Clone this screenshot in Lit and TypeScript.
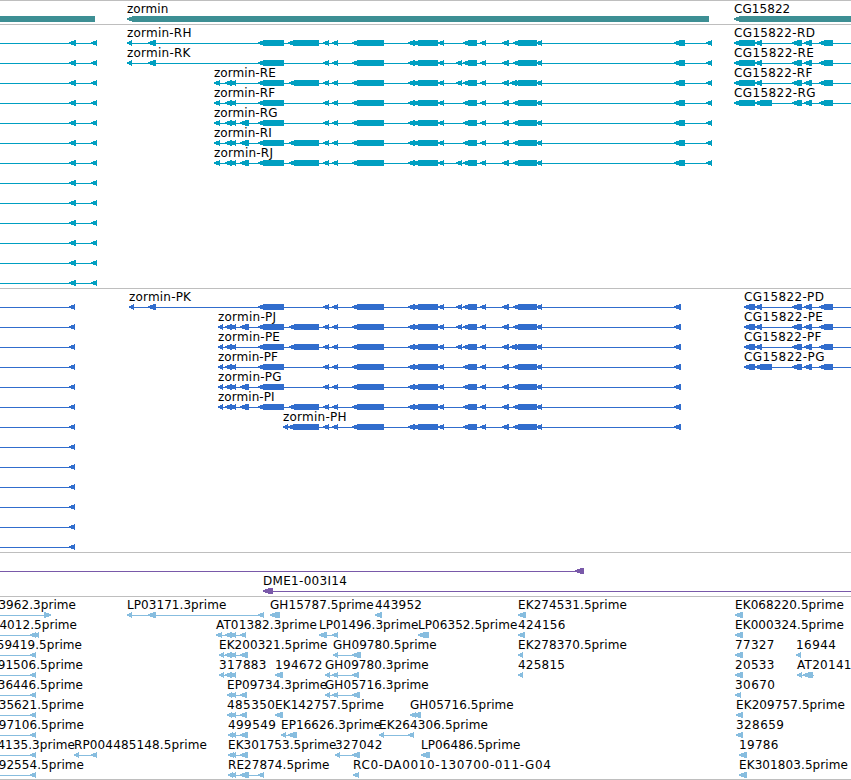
import { LitElement, html, svg, css, nothing } from 'lit';
import { customElement, property } from 'lit/decorators.js';

type Span = [number, number];

interface Feature {
    exons: Span[];
    label?: string;
    labelWidth?: number;
    // the label is cut by the left edge, labelEnd is where it stops
    labelEnd?: number;
    from?: number;
    to?: number;
    forward?: boolean;
}

interface Track {
    kind: string;
    rows: Feature[][];
}

const WIDTH = 851;

const f = (label: string, exons: Span[], more: Partial<Feature> = {}): Feature => ({ label, exons, ...more });

const cut = (label: string, labelEnd: number, exons: Span[] = [[30, 36]]): Feature => ({
    label, labelEnd, exons, from: 0,
});

// exons shared by the zormin models
const A: Span = [258, 284];
const B: Span = [289, 319];
const C: Span[] = [[323, 329], [332, 338], [352, 384], [408, 415], [413, 438], [438, 444]];
const D: Span = [456, 462];
const E: Span[] = [[463, 477], [480, 486], [502, 509]];
const F: Span = [510, 517];
const G: Span[] = [[513, 537], [536, 542]];
const R_END: Span[] = [[674, 685], [706, 712]];
const P_END: Span[] = [[674, 681]];
const SMALL: Span[] = [[225, 232], [230, 236]];
const H: Span = [240, 249];
const CG_TAIL: Span[] = [[792, 802], [804, 812], [819, 833]];

const leftR = (): Feature => ({ exons: [[69, 76], [91, 97]], from: 0 });
const leftP = (): Feature => ({ exons: [[69, 75]], from: 0 });

const cg = (name: string, start: number, labelWidth: number, second: Span = [755, 762]): Feature =>
    f(name, [[start, 755], second, ...CG_TAIL], { to: WIDTH, labelWidth });

const genes: Track = {
    kind: 'gene',
    rows: [[
        { exons: [[-10, 95]] },
        f('zormin', [[127, 709]]),
        f('CG15822', [[734, 870]]),
    ]],
};

const transcripts: Track = {
    kind: 'transcript',
    rows: [
        [leftR(), f('zormin-RH', [[127, 132], [148, 156], A, [288, 319], ...C, ...E, ...G, ...R_END], { labelWidth: 64.5 }), cg('CG15822-RD', 734, 81)],
        [leftR(), f('zormin-RK', [[127, 132], [148, 156], A, ...C, D, ...E, ...G, ...R_END], { labelWidth: 63.5 }), cg('CG15822-RE', 734, 80)],
        [leftR(), f('zormin-RE', [[214, 220], ...SMALL, A, B, ...C, D, ...E, F, ...G, ...R_END]), cg('CG15822-RF', 734, 78.5)],
        [leftR(), f('zormin-RF', [[214, 220], ...SMALL, A, ...C, ...E, ...G, ...R_END]), cg('CG15822-RG', 734, 81.5, [755, 772])],
        [leftR(), f('zormin-RG', [[214, 220], ...SMALL, H, A, ...C, ...E, ...G, ...R_END])],
        [leftR(), f('zormin-RI', [[214, 220], ...SMALL, H, A, B, ...C, ...E, ...G, ...R_END])],
        [leftR(), f('zormin-RJ', [[214, 220], ...SMALL, H, A, B, ...C, D, ...E, ...G, ...R_END], { labelWidth: 59 })],
        [leftR()], [leftR()], [leftR()], [leftR()], [leftR()], [leftR()],
    ],
};

const proteins: Track = {
    kind: 'protein',
    rows: [
        [leftP(), f('zormin-PK', [[129, 134], [148, 156], A, ...C, D, ...E, ...G, ...P_END], { labelWidth: 62 }), cg('CG15822-PD', 744, 80)],
        [leftP(), f('zormin-PJ', [[218, 223], ...SMALL, H, A, B, ...C, D, ...E, ...G, ...P_END], { labelWidth: 58 }), cg('CG15822-PE', 744, 79)],
        [leftP(), f('zormin-PE', [[218, 223], ...SMALL, A, B, ...C, D, ...E, F, ...G, ...P_END], { labelWidth: 62 }), cg('CG15822-PF', 744, 77.5)],
        [leftP(), f('zormin-PF', [[218, 223], ...SMALL, A, ...C, ...E, ...G, ...P_END]), cg('CG15822-PG', 744, 80.5, [755, 772])],
        [leftP(), f('zormin-PG', [[218, 223], ...SMALL, H, A, ...C, ...E, ...G, ...P_END], { labelWidth: 63.5 })],
        [leftP(), f('zormin-PI', [[218, 223], ...SMALL, H, A, B, ...C, ...E, ...G, ...P_END])],
        [leftP(), f('zormin-PH', [[283, 288], [288, 319], ...C, ...E, ...G, ...P_END], { labelWidth: 63.5 })],
        [leftP()], [leftP()], [leftP()], [leftP()], [leftP()], [leftP()],
    ],
};

const clones: Track = {
    kind: 'clone',
    rows: [
        [{ exons: [[575, 584]], from: 0 }],
        [f('DME1-003I14', [[263, 273]], { to: WIDTH, labelWidth: 84 })],
    ],
};

const ests: Track = {
    kind: 'est',
    rows: [
        [
            { ...cut('3962.3prime', 76, [[44, 51]]), forward: true },
            f('LP03171.3prime', [[127, 132], [148, 156], [258, 264]]),
            f('GH15787.5prime', [[270, 280]]),
            f('443952', [[375, 382]], { labelWidth: 47 }),
            f('EK274531.5prime', [[518, 526]], { labelWidth: 109 }),
            f('EK068220.5prime', [[735, 743]], { labelWidth: 109 }),
        ],
        [
            cut('4012.5prime', 77, [[30, 36], [33, 39]]),
            f('AT01382.3prime', [[216, 222], ...SMALL, [240, 246]], { labelWidth: 101 }),
            f('LP01496.3prime', [[319, 327], [332, 338]]),
            f('LP06352.5prime', [[418, 429]]),
            f('424156', [[518, 525]], { labelWidth: 47.5 }),
            f('EK000324.5prime', [[735, 743]], { labelWidth: 109 }),
        ],
        [
            cut('59419.5prime', 82),
            f('EK200321.5prime', [[219, 224], ...SMALL, [240, 248]]),
            f('GH09780.5prime', [[333, 338], [352, 361]]),
            f('EK278370.5prime', [[518, 523]], { labelWidth: 109 }),
            f('77327', [[735, 743]], { labelWidth: 39.5 }),
            f('16944', [[796, 801]], { labelWidth: 40 }),
        ],
        [
            cut('91506.5prime', 83),
            f('317883', [[219, 224], ...SMALL], { labelWidth: 47.5 }),
            f('194672', [[275, 283]], { labelWidth: 47.5 }),
            f('GH09780.3prime', [[325, 330], [332, 338], [352, 359]]),
            f('425815', [[518, 523]], { labelWidth: 47 }),
            f('20533', [[735, 743]], { labelWidth: 39.5 }),
            f('AT20141', [[797, 802], [803, 813]], { to: 814, labelWidth: 54.5 }),
        ],
        [
            cut('36446.5prime', 83),
            f('EP09734.3prime', [[227, 232], [230, 236], [240, 247]]),
            f('GH05716.3prime', [[325, 330], [332, 338], [352, 360]]),
            f('30670', [[735, 741]], { labelWidth: 40 }),
        ],
        [
            cut('35621.5prime', 84),
            f('485350', [[227, 232], [230, 236], [240, 247]], { labelWidth: 48 }),
            f('EK142757.5prime', [[275, 283]], { labelWidth: 109 }),
            f('GH05716.5prime', [[410, 416], [413, 421]]),
            f('EK209757.5prime', [[736, 743]], { labelWidth: 109 }),
        ],
        [
            cut('97106.5prime', 84),
            f('499549', [[228, 233], [230, 236], [240, 248]], { labelWidth: 48 }),
            f('EP16626.3prime', [[281, 286], [288, 297]]),
            f('EK264306.5prime', [[379, 384], [408, 414]], { labelWidth: 109 }),
            f('328659', [[736, 743]], { labelWidth: 48 }),
        ],
        [
            cut('4135.3prime', 75),
            f('RP004485148.5prime', [[74, 79], [91, 97]], { labelWidth: 133 }),
            f('EK301753.5prime', [[228, 234], [230, 236], [240, 248]]),
            f('327042', [[335, 340], [352, 360]], { labelWidth: 47.5 }),
            f('LP06486.5prime', [[421, 430]]),
            f('19786', [[739, 747]], { labelWidth: 39.5 }),
        ],
        [
            cut('92554.5prime', 84),
            f('RE27874.5prime', [[228, 233], [230, 236], [240, 249], [258, 264]]),
            f('RC0-DA0010-130700-011-G04', [[353, 359]], { labelWidth: 198 }),
            f('EK301803.5prime', [[739, 747]], { labelWidth: 109 }),
        ],
    ],
};

@customElement('feature-row')
export class FeatureRow extends LitElement {
    static styles = css`
        :host {
            display: block;
            height: 20px;
        }

        svg {
            display: block;
            width: 100%;
            height: 20px;
        }

        .glyph {
            fill: var(--glyph);
            shape-rendering: crispEdges;
        }

        .label {
            font-family: 'DejaVu Sans', sans-serif;
            font-size: 12px;
            letter-spacing: 0.06px;
            fill: #000;
        }

        .cut {
            text-anchor: end;
        }
    `;

    @property({ attribute: false }) features: Feature[] = [];

    private arrow([start, end]: Span, forward = false) {
        const head = Math.min(6, end - start);
        const points = forward
            ? `${end},15.4 ${end - head},13 ${start},13 ${start},19 ${end - head},19 ${end},16.6`
            : `${start},15.4 ${start + head},13 ${end},13 ${end},19 ${start + head},19 ${start},16.6`;
        return svg`<polygon class="glyph" points=${points}></polygon>`;
    }

    private label(item: Feature) {
        return svg`<text
            class=${item.labelEnd === undefined ? 'label' : 'label cut'}
            x=${item.labelEnd ?? item.exons[0][0]}
            y="10"
            textLength=${item.labelWidth ?? nothing}
        >${item.label}</text>`;
    }

    private feature(item: Feature) {
        const from = item.from ?? item.exons[0][0];
        const to = item.to ?? item.exons[item.exons.length - 1][1];
        return svg`
            <rect class="glyph" x=${from} y="16" width=${to - from} height="1"></rect>
            ${item.exons.map((e) => this.arrow(e, item.forward))}
            ${item.label ? this.label(item) : nothing}
        `;
    }

    render() {
        return html`<svg>${this.features.map((item) => this.feature(item))}</svg>`;
    }
}

@customElement('app-root')
export class AppRoot extends LitElement {
    static styles = css`
        :host {
            display: block;
            box-sizing: border-box;
            width: 851px;
            height: 780px;
            overflow: hidden;
            background: #fff;
            border-bottom: 1px solid #bebebe;
        }

        .track {
            padding: 2px 0 1px;
            border-top: 1px solid #bebebe;
        }

        .gene {
            --glyph: #3d8f94;
        }

        .transcript {
            --glyph: #009fc1;
        }

        .protein {
            --glyph: #316dcd;
        }

        .clone {
            --glyph: #7959a9;
        }

        .est {
            --glyph: #87bddf;
        }
    `;

    render() {
        return html`
            ${[genes, transcripts, proteins, clones, ests].map((track) => html`
                <section class="track ${track.kind}">
                    ${track.rows.map((row) => html`<feature-row .features=${row}></feature-row>`)}
                </section>
            `)}
        `;
    }
}
